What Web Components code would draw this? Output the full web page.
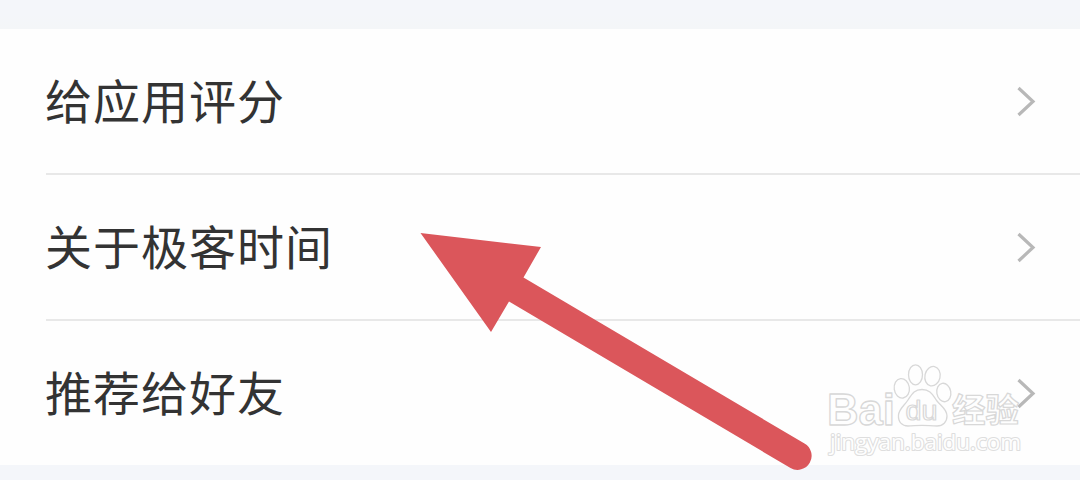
<!DOCTYPE html>
<html lang="zh-CN">
<head>
<meta charset="utf-8">
<title>设置</title>
<style>
    body {
        margin: 0;
        background: #f5f6fa;
        font-family: "Noto Sans CJK SC", sans-serif;
    }
</style>
</head>
<body>
<settings-page>
    <settings-row>给应用评分</settings-row>
    <settings-row>关于极客时间</settings-row>
    <settings-row last>推荐给好友</settings-row>
    <pointer-arrow slot="overlay"></pointer-arrow>
    <site-watermark slot="overlay"></site-watermark>
</settings-page>

<script>
class SettingsPage extends HTMLElement {
    constructor() {
        super();
        this.attachShadow( { mode: 'open' } );
        this.shadowRoot.innerHTML = `
            <style>
                :host {
                    display: block;
                    position: relative;
                    box-sizing: border-box;
                    width: 1080px;
                    height: 480px;
                    padding-top: 29px;
                    overflow: hidden;
                    background: linear-gradient(#f4f6fa 14px, #f4f6f8 28px, #f4f6fa 60px);
                }
                .list {
                    display: flex;
                    flex-direction: column;
                    background: #fefefe;
                }
            </style>
            <div class="list"><slot></slot></div>
            <slot name="overlay"></slot>`;
    }
}

class SettingsRow extends HTMLElement {
    constructor() {
        super();
        this.attachShadow( { mode: 'open' } );
        this.shadowRoot.innerHTML = `
            <style>
                :host {
                    display: flex;
                    flex-direction: column;
                    height: 146px;
                    color: #333;
                }
                :host([last]) {
                    height: 144px;
                }
                .content {
                    flex: 1;
                    display: flex;
                    align-items: center;
                    justify-content: space-between;
                    padding: 0 44px 0 45px;
                }
                .label {
                    padding-bottom: 4px;
                    font-size: 47px;
                    line-height: 70px;
                    letter-spacing: 1px;
                    white-space: nowrap;
                }
                .divider {
                    height: 2px;
                    margin-left: 46px;
                    background: #e8e8e8;
                }
                :host([last]) .content {
                    flex: none;
                    height: 144px;
                }
                :host([last]) .divider {
                    display: none;
                }
                svg {
                    display: block;
                }
            </style>
            <div class="content">
                <span class="label"><slot></slot></span>
                <svg width="20" height="32" viewBox="0 0 20 32" fill="none" stroke="#b8b8b8" stroke-width="3.2">
                    <path d="M2.5 3 L17 16.5 L2.5 30"/>
                </svg>
            </div>
            <div class="divider"></div>`;
    }
}

class PointerArrow extends HTMLElement {
    constructor() {
        super();
        this.attachShadow( { mode: 'open' } );
        this.shadowRoot.innerHTML = `
            <style>
                :host {
                    position: absolute;
                    left: 420px;
                    top: 232px;
                }
                svg {
                    display: block;
                }
            </style>
            <svg width="394" height="240" viewBox="420 232 394 240">
                <path fill="#db565b" d="M420.5 233 L541 247 L523.5 277.5 L804.5 443.5 A14 14 0 0 1 790.5 468 L509 301.5 L491 332 Z"/>
            </svg>`;
    }
}

class SiteWatermark extends HTMLElement {
    constructor() {
        super();
        this.attachShadow( { mode: 'open' } );
        this.shadowRoot.innerHTML = `
            <style>
                :host {
                    position: absolute;
                    left: 820px;
                    top: 358px;
                }
                svg {
                    display: block;
                }
                text {
                    stroke-linejoin: round;
                }
                .latin {
                    font-family: "Liberation Sans", sans-serif;
                    font-weight: bold;
                }
                .du {
                    font-family: "Liberation Sans", sans-serif;
                }
                .cjk {
                    font-family: "Noto Sans CJK SC", sans-serif;
                    font-weight: bold;
                }
                .url {
                    font-family: "Open Sans", sans-serif;
                    paint-order: stroke;
                }
            </style>
            <svg width="206" height="104" viewBox="820 358 206 104" fill="#fefefe" stroke="#d8d8d8" stroke-width="1.3">
                <text class="latin" x="827" y="424.5" font-size="44" textLength="68" lengthAdjust="spacingAndGlyphs">Bai</text>
                <g stroke-width="1.3">
                    <ellipse cx="901.8" cy="388.3" rx="7.6" ry="9.8" transform="rotate(-8 901.8 388.3)"/>
                    <ellipse cx="915.5" cy="374.8" rx="7" ry="10"/>
                    <ellipse cx="932.5" cy="376.2" rx="7.6" ry="9.8" transform="rotate(12 932.5 376.2)"/>
                    <ellipse cx="943.8" cy="392.5" rx="7" ry="9.3" transform="rotate(-10 943.8 392.5)"/>
                    <path d="M922 389.5 C931 389.5 933 396 937 401 C941 406 947 409 947 416 C947 422 943 426 937 426 C931 426 928 425.3 922 425.3 C916 425.3 913 426 908 426 C902 426 898 422 898.5 415 C899 409 904 406 908 400 C912 394 914 389.5 922 389.5 Z"/>
                </g>
                <text class="du" x="905.5" y="419.5" font-size="27" stroke-width="1.2" textLength="32" lengthAdjust="spacingAndGlyphs">du</text>
                <text class="cjk" x="952" y="421.5" font-size="33" stroke-width="1.2" textLength="67" lengthAdjust="spacingAndGlyphs">经验</text>
                <text class="url" x="830" y="450" font-size="22" stroke="#dedede" stroke-width="2.2" textLength="191" lengthAdjust="spacingAndGlyphs">jingyan.baidu.com</text>
            </svg>`;
    }
}

customElements.define('settings-page', SettingsPage);
customElements.define('settings-row', SettingsRow);
customElements.define('pointer-arrow', PointerArrow);
customElements.define('site-watermark', SiteWatermark);
</script>
</body>
</html>
